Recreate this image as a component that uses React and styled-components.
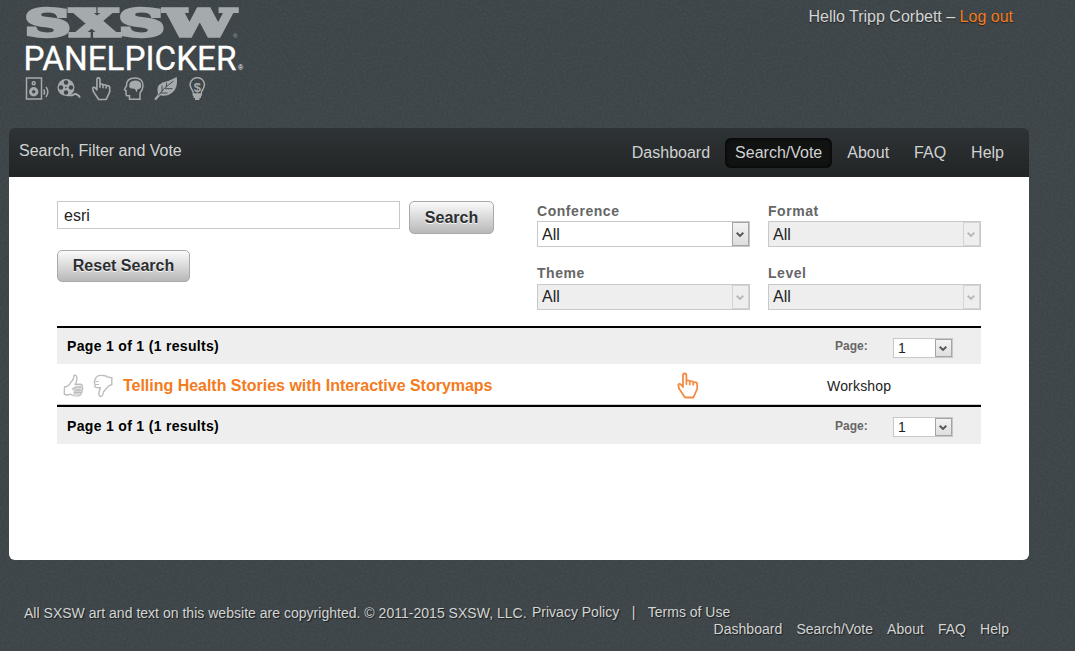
import React from "react";
import styled, { createGlobalStyle } from "styled-components";

const noise =
  "data:image/svg+xml,%3Csvg xmlns='http://www.w3.org/2000/svg' width='200' height='200'%3E%3Cfilter id='n'%3E%3CfeTurbulence type='fractalNoise' baseFrequency='.45' numOctaves='2' stitchTiles='stitch'/%3E%3CfeColorMatrix values='0 0 0 0 1 0 0 0 0 1 0 0 0 0 1 .3 0 0 0 -.1'/%3E%3C/filter%3E%3Crect width='200' height='200' filter='url(%23n)' opacity='.25'/%3E%3C/svg%3E";

const GlobalStyle = createGlobalStyle`
  body {
    margin: 0;
    overflow: hidden;
    background: #3c4447 url("${noise}");
    font-family: "Liberation Sans", Arial, sans-serif;
    font-size: 16px;
    color: #222;
  }

  * {
    box-sizing: border-box;
  }

  a {
    color: inherit;
    text-decoration: none;
  }
`;

const Page = styled.div`
  width: 1020px;
  height: 651px;
  margin-left: 9px;
`;

const Header = styled.header`
  display: flex;
  justify-content: space-between;
  height: 128px;
  padding: 0 16px 0 10px;
`;

const Logo = styled.svg`
  width: 240px;
  height: 110px;
  display: block;
`;

const Greeting = styled.div`
  padding-top: 8px;
  line-height: 18px;
  color: #d3d5d5;
  text-shadow: 0 1px 1px #222;

  a {
    color: #f47b20;
  }
`;

const NavBar = styled.nav`
  display: flex;
  justify-content: space-between;
  height: 49px;
  padding: 10px 15px 0 10px;
  border-radius: 6px 6px 0 0;
  background: linear-gradient(#2e3335, #222526);
  color: #d0d2d2;
`;

const NavTitle = styled.div`
  padding-top: 4px;
  line-height: 18px;
`;

const NavLinks = styled.div`
  display: flex;
  gap: 5px;
`;

const NavLink = styled.a`
  height: 30px;
  padding: 0 10px;
  line-height: 29px;
  border-radius: 6px;
  background: ${(props) => (props.$active ? "#111212" : "none")};
  box-shadow: ${(props) => (props.$active ? "inset 0 0 4px #000" : "none")};
`;

const Panel = styled.main`
  height: 383px;
  padding: 24px 48px 0;
  border-radius: 0 0 6px 6px;
  background: #fff;
`;

const Filters = styled.form`
  display: flex;
  justify-content: space-between;
  height: 125px;
`;

const SearchBox = styled.div`
  width: 437px;
`;

const SearchRow = styled.div`
  display: flex;
  justify-content: space-between;
  align-items: flex-start;
  margin-bottom: 16px;
`;

const SearchInput = styled.input`
  width: 343px;
  height: 28px;
  padding: 2px 6px 0;
  border: 1px solid #c8c8c8;
  font: inherit;
  color: #222;
  outline: none;
`;

const Button = styled.button`
  width: ${(props) => props.$width}px;
  height: ${(props) => props.$height}px;
  padding: 0;
  border: 1px solid #a9a9a9;
  border-radius: 5px;
  background: linear-gradient(#fbfbfb, #b8b8b8);
  font: bold 16px "Liberation Sans", Arial, sans-serif;
  color: #2b2f31;
  text-shadow: 0 1px 1px #fff;
`;

const Selects = styled.div`
  display: grid;
  grid-template-columns: 213px 213px;
  grid-template-rows: 62px 63px;
  column-gap: 18px;
`;

const Field = styled.div`
  display: flex;
  flex-direction: column;
  gap: ${(props) => (props.$lower ? "1px" : "0")};
`;

const Label = styled.label`
  display: block;
  height: 20px;
  line-height: 20px;
  font-size: 14px;
  font-weight: bold;
  letter-spacing: 0.55px;
  color: #666;
`;

const SelectBox = styled.div`
  display: flex;
  justify-content: space-between;
  width: ${(props) => (props.$small ? "60px" : "213px")};
  height: ${(props) => (props.$small ? "20px" : "26px")};
  padding-left: 4px;
  border: 1px solid #c8c8c8;
  background: ${(props) => (props.$disabled ? "#eee" : "#fff")};
  font-size: ${(props) => (props.$small ? "14px" : "16px")};
  line-height: ${(props) => props.$line}px;
`;

const Arrow = styled.span`
  display: flex;
  align-items: center;
  justify-content: center;
  width: 17px;
  padding: 1px 1px 0 0;
  border: 1px solid ${(props) => (props.$disabled ? "#d4d4d4" : "#a5a5a5")};
  background: ${(props) =>
    props.$disabled ? "#eee" : "linear-gradient(#f3f3f3, #dedede)"};
  color: ${(props) => (props.$disabled ? "#b8b8b8" : "#555")};
`;

const PageBar = styled.div`
  display: flex;
  height: ${(props) => (props.$bottom ? "39px" : "38px")};
  padding: 0 28px 0 10px;
  border-top: 2px solid #000;
  background: #eee;
  font-size: 14px;
  font-weight: bold;
  color: #000;
  line-height: ${(props) => (props.$bottom ? "38px" : "36px")};
`;

const PageCount = styled.div`
  width: 768px;
  letter-spacing: 0.32px;
`;

const PageLabel = styled.div`
  width: 58px;
  font-size: 12px;
  color: #666;
`;

const PageSelect = styled.div`
  padding-top: 10px;
  font-weight: normal;
  color: #222;
`;

const Result = styled.div`
  display: flex;
  align-items: center;
  height: 41px;
  padding: 4px 0 0 6px;
  border-bottom: 1px solid #ccc;
`;

const Votes = styled.div`
  display: flex;
  gap: 9px;
  width: 60px;
`;

const ResultTitle = styled.a`
  width: 554px;
  font-weight: bold;
  letter-spacing: -0.02px;
  color: #f47b20 !important;
`;

const Conference = styled.div`
  width: 150px;
  height: 28px;
`;

const Kind = styled.div`
  font-size: 14px;
  letter-spacing: 0.18px;
`;

const Footer = styled.footer`
  padding: 43px 20px 0 15px;
  font-size: 14px;
  line-height: 17px;
  color: #d3d5d5;
  text-shadow: 1px 1px 1px #1c1f20;
`;

const Legal = styled.div`
  display: flex;
  height: 18px;
`;

const Copyright = styled.span`
  width: 508px;
  padding-top: 2px;
  letter-spacing: 0.02px;
  white-space: nowrap;
`;

const Policies = styled.span`
  display: flex;
  gap: 12.5px;
  padding-top: 1px;
`;

const FooterLinks = styled.div`
  display: flex;
  justify-content: flex-end;
  gap: 14px;
  letter-spacing: 0.04px;
`;

const links = ["Dashboard", "Search/Vote", "About", "FAQ", "Help"];

function Hand() {
  return (
    <path
      d="M6 15V3.200a1.700 1.700 0 0 1 3.400 0V12M9.400 8.500q3-.6 3.400.8v3.200M12.800 9.300q3-.5 3.400.8v2.700M16.200 10.200q3.600-.3 4 1.500V17l-2.900 6.500-1 2H8L2 16.500l-.7-3.700q.8-1.600 2.400-.5L6 14.500"
      fill="none"
      stroke="currentColor"
      strokeWidth="1.800"
      strokeLinejoin="round"
      strokeLinecap="round"
    />
  );
}

function PanelPickerLogo() {
  return (
    <Logo viewBox="19 0 240 110">
      <text
        x="25"
        y="36.300"
        fontFamily="DejaVu Serif"
        fontWeight="bold"
        fontSize="37.500"
        fill="#a5aaac"
        stroke="#a5aaac"
        strokeWidth="3.600"
        strokeLinejoin="miter"
        textLength="210"
        lengthAdjust="spacingAndGlyphs"
      >
        SXSW
      </text>
      <text x="233" y="38" fontFamily="Liberation Sans" fontSize="6" fill="#a5aaac">®</text>
      <text
        x="23.500"
        y="69.500"
        fontFamily="Roboto"
        fontSize="33"
        fill="#fff"
        stroke="#fff"
        strokeWidth=".3"
        textLength="213"
        lengthAdjust="spacingAndGlyphs"
      >
        PANELPICKER
      </text>
      <text x="238" y="70" fontFamily="Liberation Sans" fontSize="7" fill="#fff">®</text>
      <g color="#a5aaac" fill="none" stroke="#a5aaac" strokeWidth="1.500">
        <g>
          <rect x="26.500" y="78" width="15" height="21" />
          <circle cx="33.700" cy="83.300" r="1.500" />
          <circle cx="33.700" cy="91.700" r="3.200" strokeWidth="3" />
          <path d="M43.700 89.500q1.800 2.500 0 5M46 87q3.600 4.500 0 10" />
        </g>
        <g>
          <circle cx="66" cy="87.500" r="8.500" fill="#a5aaac" stroke="none" />
          <g fill="#3d4548" stroke="none">
            <circle cx="66" cy="82.500" r="2.200" />
            <circle cx="66" cy="92.500" r="2.200" />
            <circle cx="61" cy="87.500" r="2.200" />
            <circle cx="71" cy="87.500" r="2.200" />
            <circle cx="66" cy="87.500" r=".8" />
          </g>
          <path d="M67 95.200h5.500q3-2.200 5-.3 1.800.8 2.300 2.800" strokeWidth="2" />
        </g>
        <g transform="translate(91.500 76.500) scale(.9)">
          <Hand />
        </g>
        <g>
          <path d="M129.500 99.300v-3.600q-3.800.8-3.500-2.200v-3l-1.500-.8 2-4q0-7.700 8.300-7.700t8.200 7.700q0 4-3 7.200v6.400z" />
          <path
            d="M129.200 86.500q-.5-6 6-6t6 5.500q0 3-3.500 3.200l-1 3-2-3.500q-5 .3-5.500-2.200z"
            fill="#a5aaac"
            stroke="none"
          />
        </g>
        <g>
          <path
            d="M154.200 99.300l3.800-5.300q-2.500-8 4.500-11.500 6.500-1.200 14.300-5.500 1.500 10.500-4.300 15.500-5 4.500-12 2.700l-4.500 5z"
            fill="#a5aaac"
            stroke="none"
          />
          <path
            d="M158.500 95.500Q163 88 173.500 81M162 91.500v-6M166.500 87.200v-4.500M160.500 93h7M165 88.700h7.500"
            stroke="#3d4548"
            strokeWidth=".9"
          />
        </g>
        <g>
          <path d="M193.300 94q0-3-1.800-5-3.200-6 1.300-9.800 4.500-2.700 9 0 4.500 3.800 1.300 9.800-1.800 2-1.800 5z" />
          <path d="M192.800 95h9M193.500 97h7.500M195 99h4.500" strokeWidth="1.800" />
          <text
            x="197.300"
            y="91.500"
            textAnchor="middle"
            fontFamily="Liberation Sans"
            fontWeight="bold"
            fontSize="13"
            fill="#a5aaac"
            stroke="none"
          >
            $
          </text>
        </g>
      </g>
    </Logo>
  );
}

function ThumbUp() {
  return (
    <svg width="21" height="24" viewBox="0 0 21 24" fill="none" stroke="#bdbdbd" strokeWidth="1.400">
      <path d="M1.500 13q5-1 6.500-5 3-2 2.700-5.500.5-2.300 2.500-.7 1.500 3-.2 7l-.8 1.700 5.300-.2q2.300.4 1.500 2.700 1.300 1.500 0 3 .5 2-.7 2.800.2 2.300-2 2.700-3.500.8-7-.3l-2-1-2.500.8q-2.500.3-3.500-1z" />
      <path
        d="M10 14.500l4-1.500h4l-.5 7.500-3 1.200h-4z"
        fill="#ddd"
        stroke="none"
      />
      <path d="M9 15.500q2-2.500 5-2.500h4.500M11.500 16h7M11 18.500h7" />
    </svg>
  );
}

function ThumbDown() {
  return (
    <svg width="21" height="24" viewBox="0 0 21 24" fill="none" stroke="#bdbdbd" strokeWidth="1.400">
      <path d="M4 2.500q2-1.500 6.500-1 2.500 0 4.500 1.700l3.800.5v7q-3 .3-4.800 3-2.300 2.500-3.500 4.300-.6 4.500-3 4.500-2.300-.8-1.500-4l1.300-4.800q-3.300.3-4.800-.6-1.500-1 0-2.600-2-1.500-.5-3-1-1.600.6-2.500-.2-1.500 1.400-2.500z" />
      <path d="M2.500 7.500h3M3 10.500h3" strokeWidth="1" />
    </svg>
  );
}

function Select({ value, disabled, small, line }) {
  return (
    <SelectBox $disabled={disabled} $small={small} $line={line}>
      {value}
      <Arrow $disabled={disabled}>
        <svg width="8" height="6" viewBox="0 0 8 6">
          <path d="M.7.800L4 4l3.300-3.200" fill="none" stroke="currentColor" strokeWidth="1.900" />
        </svg>
      </Arrow>
    </SelectBox>
  );
}

function Pagination({ bottom }) {
  return (
    <PageBar $bottom={bottom}>
      <PageCount>Page 1 of 1 (1 results)</PageCount>
      <PageLabel>Page:</PageLabel>
      <PageSelect>
        <Select value="1" small line={19} />
      </PageSelect>
    </PageBar>
  );
}

export default function App() {
  return (
    <Page>
      <GlobalStyle />
      <Header>
        <PanelPickerLogo />
        <Greeting>
          Hello Tripp Corbett – <a href="#logout">Log out</a>
        </Greeting>
      </Header>

      <NavBar>
        <NavTitle>Search, Filter and Vote</NavTitle>
        <NavLinks>
          {links.map((link) => (
            <NavLink key={link} href="#" $active={link === "Search/Vote"}>
              {link}
            </NavLink>
          ))}
        </NavLinks>
      </NavBar>

      <Panel>
        <Filters>
          <SearchBox>
            <SearchRow>
              <SearchInput defaultValue="esri" />
              <Button type="button" $width={85} $height={33}>
                Search
              </Button>
            </SearchRow>
            <Button type="button" $width={133} $height={32}>
              Reset Search
            </Button>
          </SearchBox>
          <Selects>
            {["Conference", "Format", "Theme", "Level"].map((name, i) => (
              <Field key={name} $lower={i > 1}>
                <Label>{name}</Label>
                <Select
                  value="All"
                  disabled={name !== "Conference"}
                  line={i > 1 ? 24 : 26}
                />
              </Field>
            ))}
          </Selects>
        </Filters>

        <Pagination />
        <Result>
          <Votes>
            <ThumbUp />
            <ThumbDown />
          </Votes>
          <ResultTitle href="#">
            Telling Health Stories with Interactive Storymaps
          </ResultTitle>
          <Conference>
            <svg width="24" height="28" viewBox="0 0 24 28" color="#f58a42">
              <Hand />
            </svg>
          </Conference>
          <Kind>Workshop</Kind>
        </Result>
        <Pagination bottom />
      </Panel>

      <Footer>
        <Legal>
          <Copyright>
            All SXSW art and text on this website are copyrighted. © 2011-2015
            SXSW, LLC.
          </Copyright>
          <Policies>
            <a href="#">Privacy Policy</a>
            <span>|</span>
            <a href="#">Terms of Use</a>
          </Policies>
        </Legal>
        <FooterLinks>
          {links.map((link) => (
            <a key={link} href="#">
              {link}
            </a>
          ))}
        </FooterLinks>
      </Footer>
    </Page>
  );
}
